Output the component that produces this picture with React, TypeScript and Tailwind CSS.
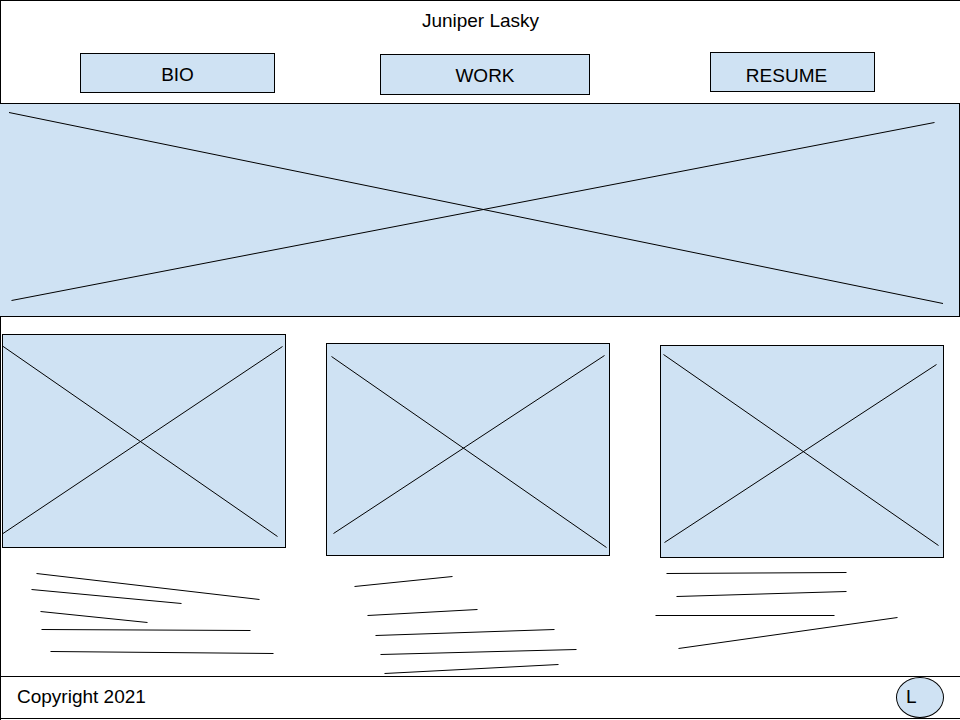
type Line = [number, number, number, number];

function Strokes({ lines, width, height, className }: { lines: Line[]; width: number; height: number; className: string }) {
  return (
    <svg
      viewBox={`0 0 ${width} ${height}`}
      preserveAspectRatio="none"
      className={`block w-full overflow-visible stroke-black ${className}`}
      aria-hidden="true"
    >
      {lines.map(([x1, y1, x2, y2], i) => (
        <line key={i} x1={x1} y1={y1} x2={x2} y2={y2} strokeWidth="1" vectorEffect="non-scaling-stroke" />
      ))}
    </svg>
  );
}

const heroCross: Line[] = [
  [9, 8.5, 943, 199.5],
  [11.5, 196.5, 934.5, 18.5],
];

const cards: { column: string; pictureHeight: number; picture: string; cross: Line[]; textHeight: number; text: string; lines: Line[] }[] = [
  {
    column: "pt-[17px]",
    pictureHeight: 212,
    picture: "h-[212px]",
    cross: [
      [-0.5, 11, 274.5, 201.5],
      [0, 198.5, 279.5, 11.5],
    ],
    textHeight: 128,
    text: "h-[128px]",
    lines: [
      [34.5, 25.5, 257.5, 51.5],
      [29.5, 41.5, 179.5, 55.5],
      [38.5, 63.5, 145.5, 74.5],
      [39.5, 81.5, 248.5, 82.5],
      [48.5, 103.5, 271.5, 105.5],
    ],
  },
  {
    column: "ml-10 pt-[26px]",
    pictureHeight: 211,
    picture: "h-[211px]",
    cross: [
      [4.5, 12.5, 279.5, 203.5],
      [6.5, 189.5, 277.5, 11.5],
    ],
    textHeight: 120,
    text: "h-[120px]",
    lines: [
      [28.5, 30.5, 126.5, 20.5],
      [41.5, 59.5, 151.5, 53.5],
      [49.5, 79.5, 228.5, 73.5],
      [54.5, 98.5, 250.5, 93.5],
      [58.5, 117.5, 232.5, 108.5],
    ],
  },
  {
    column: "ml-[50px] pt-7",
    pictureHeight: 211,
    picture: "h-[211px]",
    cross: [
      [2.5, 8.5, 277.5, 199.5],
      [3.5, 196.5, 275.5, 18.5],
    ],
    textHeight: 118,
    text: "h-[118px]",
    lines: [
      [6.5, 15.5, 186.5, 14.5],
      [16.5, 38.5, 186.5, 33.5],
      [-4.5, 57.5, 174.5, 57.5],
      [18.5, 90.5, 237.5, 59.5],
    ],
  },
];

const navButton = "border border-black bg-[#cfe2f3] leading-6";

export default function App() {
  return (
    <div className="flex min-h-screen flex-col border-t border-l border-black bg-white font-['Liberation_Sans',Arial,sans-serif] text-[19px] leading-6 text-black">
      <header className="h-[102px]">
        <h1 className="pt-2 text-center">Juniper Lasky</h1>
        <nav className="grid grid-cols-[195fr_105fr_210fr_120fr_165fr] items-start pt-[19px] pr-[85px] pl-[79px]">
          <button type="button" className={`mt-px h-10 pt-1 ${navButton}`}>BIO</button>
          <button type="button" className={`col-start-3 mt-0.5 h-[41px] pt-0.5 ${navButton}`}>WORK</button>
          <button type="button" className={`col-start-5 h-10 pt-2 pr-3 ${navButton}`}>RESUME</button>
        </nav>
      </header>

      <section className="-ml-px border-y border-r border-black bg-[#cfe2f3]" aria-label="Banner">
        <Strokes lines={heroCross} width={959} height={212} className="h-[212px]" />
      </section>

      <main className="flex flex-1 pr-4 pl-px">
        {cards.map((card, i) => (
          <article key={i} className={`min-w-0 flex-1 ${card.column}`}>
            <div className="border border-black bg-[#cfe2f3]">
              <Strokes lines={card.cross} width={282} height={card.pictureHeight} className={card.picture} />
            </div>
            <Strokes lines={card.lines} width={284} height={card.textHeight} className={card.text} />
          </article>
        ))}
      </main>

      <footer className="mb-px flex h-[43px] items-center justify-between border-y border-black px-4">
        <p className="pb-0.5">Copyright 2021</p>
        <a href="#" className="flex h-full w-12 items-center rounded-[50%] border border-black bg-[#cfe2f3] pb-0.5 pl-[9px]">L</a>
      </footer>
    </div>
  );
}
